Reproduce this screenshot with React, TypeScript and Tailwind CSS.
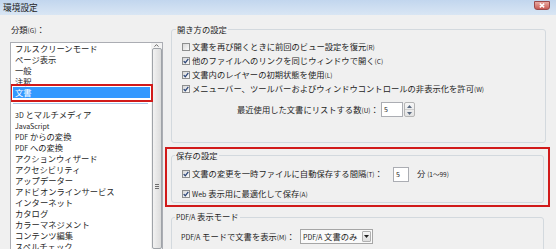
import React from "react";

const L = ({ children }: { children: React.ReactNode }) => (
  <span className="text-[7px]">{children}</span>
);
const Acc = ({ k }: { k: string }) => <span className="text-[6.5px]">({k})</span>;

function Check({ checked }: { checked: boolean }) {
  return (
    <span className="inline-flex w-[8px] h-[8px] shrink-0 items-center justify-center border border-[#8e8f8f] bg-linear-to-br from-[#d8d8d8] to-[#fbfbfb]">
      {checked && (
        <svg width="6" height="6" viewBox="0 0 6 6">
          <path d="M0.7 3.1 L2.3 4.8 L5.3 0.9" stroke="#2c4679" strokeWidth="1.3" fill="none" />
        </svg>
      )}
    </span>
  );
}

function Row({ checked, children }: { checked: boolean; children: React.ReactNode }) {
  return (
    <div className="flex items-center h-[14px] gap-[2px] whitespace-nowrap">
      <Check checked={checked} />
      <span>{children}</span>
    </div>
  );
}

const items: (string | React.ReactNode)[] = [
  "フルスクリーンモード",
  "ページ表示",
  "一般",
  "注釈",
  "文書",
  "SEP",
  <><L>3D</L> とマルチメディア</>,
  <L>JavaScript</L>,
  <><L>PDF</L> からの変換</>,
  <><L>PDF</L> への変換</>,
  "アクションウィザード",
  "アクセシビリティ",
  "アップデーター",
  "アドビオンラインサービス",
  "インターネット",
  "カタログ",
  "カラーマネジメント",
  "コンテンツ編集",
  "スペルチェック",
];

export default function App() {
  return (
    <div className="w-[556px] h-[249px] overflow-hidden bg-[#f0f0f0] text-[#1e1e1e] [font-family:'Noto_Sans_CJK_JP','Noto_Sans',sans-serif] text-[8.3px] leading-[11px] flex flex-col">
      {/* title bar */}
      <div className="h-[15px] shrink-0 bg-linear-to-b from-[#c2d6ee] to-[#d9e6f4] flex items-start justify-between">
        <span className="pl-[3px] pt-[2px] text-[8.7px] leading-[11px]">環境設定</span>
        <div className="mr-[6px] mt-[1px] w-[16px] h-[9px] rounded-b-[3px] border border-[#9c4a4a] bg-linear-to-b from-[#e9aaa2] to-[#c85a55] flex items-center justify-center">
          <svg width="6" height="5" viewBox="0 0 6 5">
            <path d="M0.8 0.6 L5.2 4.4 M5.2 0.6 L0.8 4.4" stroke="white" strokeWidth="1.4" />
          </svg>
        </div>
      </div>

      <div className="flex flex-1 min-h-0">
        {/* left column */}
        <div className="w-[165px] shrink-0 pl-[10px] pt-[9px] flex flex-col">
          <div className="pl-[1px] whitespace-nowrap">
            分類<Acc k="G" />：
          </div>
          <div className="mt-[6px] relative w-[153px] flex-1 bg-white border border-[#abadb3] border-b-0 flex overflow-hidden">
            <ul className="w-[140px] shrink-0 pl-[2px] pr-[1px]">
              {items.map((it, i) =>
                it === "SEP" ? (
                  <li key={i} className="h-[11px] flex items-center">
                    <div className="h-px w-[135px] bg-[#a9c7ea]" />
                  </li>
                ) : (
                  <li
                    key={i}
                    className={
                      "h-[11px] px-[2px] whitespace-nowrap " +
                      (i === 4 ? "bg-[#3399ff] text-white" : "")
                    }
                  >
                    {it}
                  </li>
                )
              )}
            </ul>
            {/* scrollbar */}
            <div className="w-[11px] shrink-0 bg-[#f3f3f3] flex flex-col items-center">
              <div className="h-[14px] w-full flex items-center justify-center">
                <svg width="5" height="3" viewBox="0 0 5 3">
                  <path d="M0.5 2.6 L2.5 0.6 L4.5 2.6" stroke="#5a5a5a" strokeWidth="0.9" fill="none" />
                </svg>
              </div>
              <div className="w-[10px] h-[300px] rounded-[2px] border border-[#9fa3a8] bg-linear-to-r from-[#f2f2f2] to-[#dcdcdc] flex flex-col items-center pt-[135px] gap-[1px]">
                <div className="w-[4px] h-px bg-[#6e6e6e]" />
                <div className="w-[4px] h-px bg-[#6e6e6e]" />
                <div className="w-[4px] h-px bg-[#6e6e6e]" />
              </div>
            </div>
            {/* red annotation around selected item */}
            <div className="absolute left-[-1px] top-[41px] w-[143px] h-[18px] border-2 border-[#d11a1a]" />
          </div>
        </div>

        {/* right column */}
        <div className="flex-1 pt-[9px] flex flex-col">
          <fieldset className="ml-[6px] mr-[10px] border border-[#d3d9de] rounded-[3px]">
            <legend className="ml-[4px] px-[1px] leading-[11px]">開き方の設定</legend>
            <div className="pt-[5px] pl-[10px] pb-[25px]">
              <Row checked={false}>
                文書を再び開くときに前回のビュー設定を復元<Acc k="R" />
              </Row>
              <Row checked>
                他のファイルへのリンクを同じウィンドウで開く<Acc k="C" />
              </Row>
              <Row checked>
                文書内のレイヤーの初期状態を使用<Acc k="L" />
              </Row>
              <Row checked>
                メニューバー、ツールバーおよびウィンドウコントロールの非表示化を許可<Acc k="W" />
              </Row>
              <div className="mt-[6px] h-[15px] pl-[55px] flex items-center whitespace-nowrap">
                <span className="w-[144px] shrink-0">
                  最近使用した文書にリストする数<Acc k="U" />：
                </span>
                <div className="w-[22px] h-[15px] bg-white border border-[#abadb3] pl-[2px] text-[7px] leading-[13px]">5</div>
                <div className="ml-px w-[11px] h-[15px] flex flex-col border border-[#b5b5b5] rounded-[2px] bg-linear-to-b from-[#f7f7f7] to-[#e3e3e3]">
                  <div className="flex-1 flex items-center justify-center border-b border-[#cfcfcf]">
                    <svg width="5" height="3" viewBox="0 0 5 3"><path d="M0 3 L2.5 0 L5 3 Z" fill="#5b6a80" /></svg>
                  </div>
                  <div className="flex-1 flex items-center justify-center">
                    <svg width="5" height="3" viewBox="0 0 5 3"><path d="M0 0 L2.5 3 L5 0 Z" fill="#5b6a80" /></svg>
                  </div>
                </div>
              </div>
            </div>
          </fieldset>

          {/* red annotation box around 保存の設定 */}
          <div className="mt-[4px] mr-[6px] border-2 border-[#d11a1a] pt-[1px] pb-[2px]">
            <fieldset className="mx-[4px] border border-[#d3d9de] rounded-[3px]">
              <legend className="ml-[3px] px-[1px] leading-[11px]">保存の設定</legend>
              <div className="pt-[5px] pl-[10px] pb-[2px]">
                <div className="h-[16px] flex items-center gap-[2px] whitespace-nowrap">
                  <Check checked />
                  <span className="w-[199px] shrink-0">
                    文書の変更を一時ファイルに自動保存する間隔<Acc k="T" />：
                  </span>
                  <div className="w-[16px] h-[15px] bg-white border border-[#abadb3] pl-[2px] text-[7px] leading-[13px]">5</div>
                  <span className="ml-[6px]">
                    分 <span className="text-[6.5px]">(1～99)</span>
                  </span>
                </div>
                <div className="mt-[6px] h-[12px] flex items-center gap-[2px] whitespace-nowrap">
                  <Check checked />
                  <span>
                    <L>Web</L> 表示用に最適化して保存<Acc k="A" />
                  </span>
                </div>
              </div>
            </fieldset>
          </div>

          <fieldset className="mt-[4px] ml-[6px] mr-[12px] border border-[#d3d9de] rounded-[3px]">
            <legend className="ml-[3px] px-[1px] leading-[11px]">
              <L>PDF/A</L> 表示モード
            </legend>
            <div className="pt-[6px] pl-[9px] pb-[10px]">
              <div className="h-[15px] flex items-center whitespace-nowrap">
                <span className="w-[119px] shrink-0">
                  <L>PDF/A</L> モードで文書を表示<Acc k="M" />：
                </span>
                <div className="w-[73px] h-[15px] border border-[#a6a6a6] bg-[#fafafa] flex items-center justify-between pl-[2px] pr-px">
                  <span>
                    <L>PDF/A</L> 文書のみ
                  </span>
                  <div className="w-[9px] h-[11px] border border-[#b0b0b0] rounded-[1px] bg-linear-to-b from-[#f6f6f6] to-[#dedede] flex items-center justify-center">
                    <svg width="5" height="3" viewBox="0 0 5 3"><path d="M0 0 L2.5 3 L5 0 Z" fill="#222" /></svg>
                  </div>
                </div>
              </div>
            </div>
          </fieldset>
        </div>
      </div>
    </div>
  );
}
